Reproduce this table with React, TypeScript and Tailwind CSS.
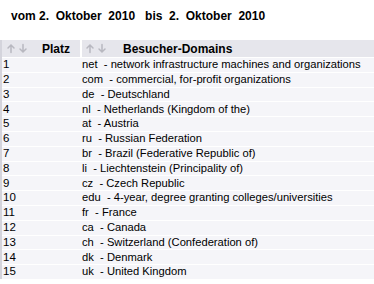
const rows: [string, string][] = [
  ['net', 'network infrastructure machines and organizations'],
  ['com', 'commercial, for-profit organizations'],
  ['de', 'Deutschland'],
  ['nl', 'Netherlands (Kingdom of the)'],
  ['at', 'Austria'],
  ['ru', 'Russian Federation'],
  ['br', 'Brazil (Federative Republic of)'],
  ['li', 'Liechtenstein (Principality of)'],
  ['cz', 'Czech Republic'],
  ['edu', '4-year, degree granting colleges/universities'],
  ['fr', 'France'],
  ['ca', 'Canada'],
  ['ch', 'Switzerland (Confederation of)'],
  ['dk', 'Denmark'],
  ['uk', 'United Kingdom'],
];

function SortArrows() {
  return (
    <svg width="22" height="11" viewBox="0 0 22 11" className="shrink-0">
      <g fill="none" stroke="#b8b8c0" strokeWidth="1.5" strokeLinecap="round">
        <path d="M5 9.5V2.5M2 5L5 2L8 5" />
        <path d="M17 1.5V8.5M14 6L17 9L20 6" />
      </g>
    </svg>
  );
}

export default function App() {
  return (
    <div className="w-[374px] h-[284px] bg-white overflow-hidden text-black" style={{ fontFamily: '"Liberation Sans", Arial, sans-serif' }}>
      <div className="pt-[7px] pl-[11px] h-[40px] text-[12px] font-bold whitespace-pre">
        vom 2.  Oktober  2010   bis  2.  Oktober  2010
      </div>
      <div className="border-l-2 border-[#d4d4dc]">
        <div className="flex h-[17px] bg-[#e6e6ec] text-[12px] font-bold">
          <div className="w-[78px] flex items-center pl-[4px] gap-[14px]">
            <SortArrows />
            <span>Platz</span>
          </div>
          <div className="flex-1 flex items-center pl-[3px] gap-[16px] border-l-2 border-white">
            <SortArrows />
            <span>Besucher-Domains</span>
          </div>
        </div>
        {rows.map(([code, name], i) => (
          <div key={code} className="flex h-[14.8px] items-center bg-[#f5f5f9] border-t border-white text-[11.2px] leading-none">
            <div className="w-[80px] pl-[1px] text-[11.5px]">{i + 1}</div>
            <div className="flex-1 whitespace-pre">{code}{'  '}-{' '}{name}</div>
          </div>
        ))}
      </div>
    </div>
  );
}
